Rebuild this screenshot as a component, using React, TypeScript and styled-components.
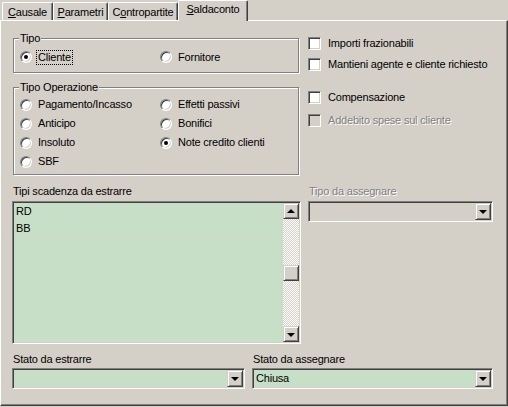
import * as React from 'react';
import styled, { createGlobalStyle, css } from 'styled-components';

const FACE = '#d4d0c8';
const SHADOW = '#808080';
const DARK = '#404040';
const LIGHT = '#ffffff';
const FIELD = '#c6dfc6';

const GlobalStyle = createGlobalStyle`
  html, body {
    margin: 0;
    padding: 0;
    background: ${FACE};
  }
  body {
    font-family: "Liberation Sans", Arial, sans-serif;
    font-size: 11px;
    letter-spacing: -0.2px;
    color: #000;
  }
`;

const Window = styled.div`
  width: 508px;
  height: 407px;
  background: ${FACE};
  display: flex;
  flex-direction: column;
  overflow: hidden;
`;

const TabStrip = styled.div`
  display: flex;
  align-items: flex-end;
  height: 20px;
  padding-left: 2px;
  position: relative;
  z-index: 1;
`;

const Tab = styled.div<{ $w: number; $active?: boolean }>`
  box-sizing: border-box;
  width: ${p => p.$w}px;
  height: 18px;
  padding-top: 1px;
  border-top: 1px solid ${LIGHT};
  border-left: 1px solid ${LIGHT};
  border-right: 1px solid ${DARK};
  border-radius: 2px 2px 0 0;
  box-shadow: inset -1px 0 0 ${SHADOW};
  background: ${FACE};
  display: flex;
  align-items: center;
  justify-content: center;
  line-height: 13px;
  white-space: nowrap;

  ${p => p.$active && css`
    height: 21px;
    margin-bottom: -1px;
    padding-top: 0;
    padding-bottom: 3px;
  `}
`;

const Key = styled.span`
  text-decoration: underline;
`;

const Panel = styled.div`
  box-sizing: border-box;
  width: 508px;
  height: 386px;
  border-top: 1px solid ${LIGHT};
  border-left: 1px solid ${LIGHT};
  border-right: 1px solid ${DARK};
  border-bottom: 1px solid ${DARK};
  box-shadow: inset -1px -1px 0 ${SHADOW};
  padding-left: 11px;
  display: flex;
  flex-direction: column;
`;

const TopSection = styled.div`
  display: flex;
`;

const LeftColumn = styled.div`
  width: 288px;
  padding-top: 17px;
  display: flex;
  flex-direction: column;
`;

const RightColumn = styled.div`
  margin-left: 8px;
  padding-top: 14px;
  display: flex;
  flex-direction: column;
`;

const Group = styled.div<{ $h: number; $top?: number }>`
  box-sizing: border-box;
  width: 286px;
  height: ${p => p.$h}px;
  margin-left: 1px;
  margin-top: ${p => p.$top ?? 0}px;
  border: 1px solid ${SHADOW};
  box-shadow: 1px 1px 0 ${LIGHT}, inset 1px 1px 0 ${LIGHT};
  padding-left: 6px;
`;

const GroupTitle = styled.div`
  width: fit-content;
  margin: -7px 0 0 -1px;
  padding: 0 1px;
  line-height: 13px;
  background: ${FACE};
`;

const RadioGrid = styled.div<{ $row: number; $top: number }>`
  display: grid;
  grid-template-columns: 140px 1fr;
  grid-auto-rows: ${p => p.$row}px;
  margin-top: ${p => p.$top}px;
`;

const RadioItem = styled.div`
  display: flex;
  align-items: center;
`;

const RadioCircle = styled.span<{ $checked?: boolean }>`
  box-sizing: border-box;
  width: 12px;
  height: 12px;
  border-radius: 50%;
  border: 1px solid;
  border-color: ${SHADOW} ${LIGHT} ${LIGHT} ${SHADOW};
  box-shadow: inset 1px 1px 0 ${DARK}, inset -1px -1px 0 ${FACE};
  background: #fff;
  display: flex;
  align-items: center;
  justify-content: center;
  flex-shrink: 0;

  &::after {
    content: '';
    width: 4px;
    height: 4px;
    border-radius: 50%;
    background: #000;
    display: ${p => (p.$checked ? 'block' : 'none')};
  }
`;

const ControlText = styled.span<{ $focused?: boolean; $disabled?: boolean }>`
  margin-left: 4px;
  padding: 0 1px;
  line-height: 13px;
  border: 1px dotted ${p => (p.$focused ? '#000' : 'transparent')};
  white-space: nowrap;
  ${p => p.$disabled && css`
    color: ${SHADOW};
    text-shadow: 1px 1px 0 ${LIGHT};
  `}
`;

const CheckRow = styled.div<{ $top: number }>`
  display: flex;
  align-items: center;
  height: 16px;
  margin-top: ${p => p.$top}px;
`;

const CheckBox = styled.span<{ $disabled?: boolean }>`
  box-sizing: border-box;
  width: 13px;
  height: 13px;
  border: 1px solid;
  border-color: ${SHADOW} ${LIGHT} ${LIGHT} ${SHADOW};
  box-shadow: inset 1px 1px 0 ${DARK}, inset -1px -1px 0 ${FACE};
  background: ${p => (p.$disabled ? FACE : '#fff')};
  flex-shrink: 0;
  margin-right: 1px;
`;

const MiddleSection = styled.div`
  display: flex;
  margin-top: 10px;
`;

const FieldColumn = styled.div<{ $w: number; $left?: number }>`
  width: ${p => p.$w}px;
  margin-left: ${p => p.$left ?? 0}px;
  display: flex;
  flex-direction: column;
`;

const FieldLabel = styled.div<{ $disabled?: boolean }>`
  line-height: 13px;
  padding-left: 1px;
  margin-bottom: 3px;
  white-space: nowrap;
  ${p => p.$disabled && css`
    color: ${SHADOW};
    text-shadow: 1px 1px 0 ${LIGHT};
  `}
`;

const sunken = css`
  box-sizing: border-box;
  border: 1px solid;
  border-color: ${SHADOW} ${LIGHT} ${LIGHT} ${SHADOW};
  box-shadow: inset 1px 1px 0 ${DARK}, inset -1px -1px 0 ${FACE};
  padding: 1px;
`;

const raised = css`
  box-sizing: border-box;
  border: 1px solid;
  border-color: ${FACE} ${DARK} ${DARK} ${FACE};
  box-shadow: inset 1px 1px 0 ${LIGHT}, inset -1px -1px 0 ${SHADOW};
  background: ${FACE};
`;

const ListBox = styled.div`
  ${sunken};
  height: 143px;
  background: ${FIELD};
  display: flex;
`;

const ListRows = styled.div`
  flex: 1;
  display: flex;
  flex-direction: column;
`;

const ListRow = styled.div`
  box-sizing: border-box;
  height: 17px;
  border-bottom: 1px solid #d6d6d0;
  padding-left: 2px;
  line-height: 16px;
`;

const ScrollBar = styled.div`
  width: 16px;
  display: flex;
  flex-direction: column;
`;

const ScrollButton = styled.div`
  ${raised};
  width: 16px;
  height: 16px;
  display: flex;
  align-items: center;
  justify-content: center;
`;

const Track = styled.div`
  flex: 1;
  background: repeating-conic-gradient(${FACE} 0% 25%, ${LIGHT} 0% 50%) 0 0 / 2px 2px;
`;

const Thumb = styled.div<{ $offset: number }>`
  ${raised};
  width: 16px;
  height: 16px;
  margin-top: ${p => p.$offset}px;
`;

const Arrow = styled.span<{ $up?: boolean }>`
  width: 0;
  height: 0;
  border-left: 4px solid transparent;
  border-right: 4px solid transparent;
  ${p => (p.$up
    ? css`border-bottom: 4px solid #000; margin-top: -1px;`
    : css`border-top: 4px solid #000; margin-top: 1px;`)}
`;

const Combo = styled.div<{ $disabled?: boolean }>`
  ${sunken};
  height: 21px;
  background: ${p => (p.$disabled ? FACE : FIELD)};
  display: flex;
`;

const ComboText = styled.div`
  flex: 1;
  padding-left: 2px;
  line-height: 17px;
`;

const DropButton = styled.div`
  ${raised};
  width: 16px;
  height: 17px;
  display: flex;
  align-items: center;
  justify-content: center;
`;

const BottomSection = styled.div`
  display: flex;
  margin-top: 9px;
`;

const BottomLabel = styled(FieldLabel)`
  margin-bottom: 2px;
`;

interface RadioProps {
  label: string;
  checked?: boolean;
  focused?: boolean;
}

const Radio = ({ label, checked, focused }: RadioProps) => (
  <RadioItem>
    <RadioCircle $checked={checked} />
    <ControlText $focused={focused}>{label}</ControlText>
  </RadioItem>
);

interface CheckProps {
  label: string;
  top: number;
  disabled?: boolean;
}

const Check = ({ label, top, disabled }: CheckProps) => (
  <CheckRow $top={top}>
    <CheckBox $disabled={disabled} />
    <ControlText $disabled={disabled}>{label}</ControlText>
  </CheckRow>
);

const ComboBox = ({ value, disabled }: { value?: string; disabled?: boolean }) => (
  <Combo $disabled={disabled}>
    <ComboText>{value}</ComboText>
    <DropButton><Arrow /></DropButton>
  </Combo>
);

const operazioni = [
  { label: 'Pagamento/Incasso' },
  { label: 'Effetti passivi' },
  { label: 'Anticipo' },
  { label: 'Bonifici' },
  { label: 'Insoluto' },
  { label: 'Note credito clienti', checked: true },
  { label: 'SBF' },
];

export default function App() {
  return (
    <Window>
      <GlobalStyle />
      <TabStrip>
        <Tab $w={51}><Key>C</Key>ausale</Tab>
        <Tab $w={55}><Key>P</Key>arametri</Tab>
        <Tab $w={70}>C<Key>o</Key>ntropartite</Tab>
        <Tab $w={70} $active><Key>S</Key>aldaconto</Tab>
      </TabStrip>
      <Panel>
        <TopSection>
          <LeftColumn>
            <Group $h={35}>
              <GroupTitle>Tipo</GroupTitle>
              <RadioGrid $row={16} $top={4}>
                <Radio label="Cliente" checked focused />
                <Radio label="Fornitore" />
              </RadioGrid>
            </Group>
            <Group $h={88} $top={14}>
              <GroupTitle>Tipo Operazione</GroupTitle>
              <RadioGrid $row={19} $top={1}>
                {operazioni.map(o => (
                  <Radio key={o.label} label={o.label} checked={o.checked} />
                ))}
              </RadioGrid>
            </Group>
          </LeftColumn>
          <RightColumn>
            <Check label="Importi frazionabili" top={0} />
            <Check label="Mantieni agente e cliente richiesto" top={5} />
            <Check label="Compensazione" top={17} />
            <Check label="Addebito spese sul cliente" top={7} disabled />
          </RightColumn>
        </TopSection>

        <MiddleSection>
          <FieldColumn $w={289}>
            <FieldLabel>Tipi scadenza da estrarre</FieldLabel>
            <ListBox>
              <ListRows>
                <ListRow>RD</ListRow>
                <ListRow>BB</ListRow>
              </ListRows>
              <ScrollBar>
                <ScrollButton><Arrow $up /></ScrollButton>
                <Track>
                  <Thumb $offset={46} />
                </Track>
                <ScrollButton><Arrow /></ScrollButton>
              </ScrollBar>
            </ListBox>
          </FieldColumn>
          <FieldColumn $w={185} $left={7}>
            <FieldLabel $disabled>Tipo da assegnare</FieldLabel>
            <ComboBox disabled />
          </FieldColumn>
        </MiddleSection>

        <BottomSection>
          <FieldColumn $w={233}>
            <BottomLabel>Stato da estrarre</BottomLabel>
            <ComboBox />
          </FieldColumn>
          <FieldColumn $w={241} $left={7}>
            <BottomLabel>Stato da assegnare</BottomLabel>
            <ComboBox value="Chiusa" />
          </FieldColumn>
        </BottomSection>
      </Panel>
    </Window>
  );
}
